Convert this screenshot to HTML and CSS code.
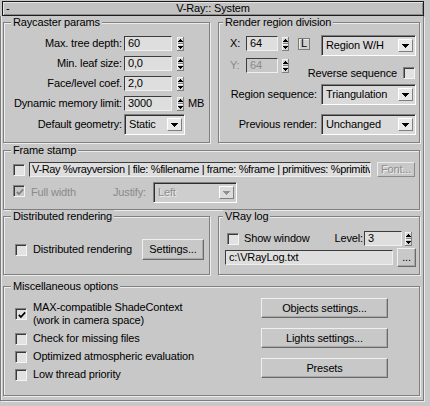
FILE: index.html
```html
<!DOCTYPE html>
<html>
<head>
<meta charset="utf-8">
<link rel="stylesheet" href="styles.css">
</head>
<body>
<div class="titlebar"><span class="minus">-</span><span class="title">V-Ray:: System</span><span></span></div>
<div class="panel">
  <div class="row1">
    <div class="group g-ray">
      <span class="glabel">Raycaster params</span>
      <div class="gbody ray-body">
        <div class="prow"><span class="plabel">Max. tree depth:</span><span class="field w48">60</span><svg class="spin" width="7" height="14" viewBox="0 0 7 14" shape-rendering="crispEdges"><rect width="7" height="14" fill="#d2d2d2"/><rect width="7" height="1" fill="#f2f2f2"/><rect width="1" height="14" fill="#f2f2f2"/><rect y="13" width="7" height="1" fill="#808080"/><rect x="6" width="1" height="14" fill="#808080"/><rect x="1" y="6" width="5" height="1" fill="#808080"/><rect x="1" y="7" width="5" height="1" fill="#f2f2f2"/><path d="M3 2h1v1H3zM2 3h3v1H2zM1 4h5v1H1zM1 9h5v1H1zM2 10h3v1H2zM3 11h1v1H3z" fill="#000"/></svg></div>
        <div class="prow"><span class="plabel">Min. leaf size:</span><span class="field w48">0,0</span><svg class="spin" width="7" height="14" viewBox="0 0 7 14" shape-rendering="crispEdges"><rect width="7" height="14" fill="#d2d2d2"/><rect width="7" height="1" fill="#f2f2f2"/><rect width="1" height="14" fill="#f2f2f2"/><rect y="13" width="7" height="1" fill="#808080"/><rect x="6" width="1" height="14" fill="#808080"/><rect x="1" y="6" width="5" height="1" fill="#808080"/><rect x="1" y="7" width="5" height="1" fill="#f2f2f2"/><path d="M3 2h1v1H3zM2 3h3v1H2zM1 4h5v1H1zM1 9h5v1H1zM2 10h3v1H2zM3 11h1v1H3z" fill="#000"/></svg></div>
        <div class="prow"><span class="plabel">Face/level coef.</span><span class="field w48">2,0</span><svg class="spin" width="7" height="14" viewBox="0 0 7 14" shape-rendering="crispEdges"><rect width="7" height="14" fill="#d2d2d2"/><rect width="7" height="1" fill="#f2f2f2"/><rect width="1" height="14" fill="#f2f2f2"/><rect y="13" width="7" height="1" fill="#808080"/><rect x="6" width="1" height="14" fill="#808080"/><rect x="1" y="6" width="5" height="1" fill="#808080"/><rect x="1" y="7" width="5" height="1" fill="#f2f2f2"/><path d="M3 2h1v1H3zM2 3h3v1H2zM1 4h5v1H1zM1 9h5v1H1zM2 10h3v1H2zM3 11h1v1H3z" fill="#000"/></svg></div>
        <div class="prow"><span class="plabel">Dynamic memory limit:</span><span class="field w48">3000</span><svg class="spin" width="7" height="14" viewBox="0 0 7 14" shape-rendering="crispEdges"><rect width="7" height="14" fill="#d2d2d2"/><rect width="7" height="1" fill="#f2f2f2"/><rect width="1" height="14" fill="#f2f2f2"/><rect y="13" width="7" height="1" fill="#808080"/><rect x="6" width="1" height="14" fill="#808080"/><rect x="1" y="6" width="5" height="1" fill="#808080"/><rect x="1" y="7" width="5" height="1" fill="#f2f2f2"/><path d="M3 2h1v1H3zM2 3h3v1H2zM1 4h5v1H1zM1 9h5v1H1zM2 10h3v1H2zM3 11h1v1H3z" fill="#000"/></svg><span class="mb">MB</span></div>
        <div class="prow prow-combo"><span class="plabel">Default geometry:</span><span class="combo w61">Static<span class="arrow"><svg width="7" height="4" viewBox="0 0 7 4" shape-rendering="crispEdges"><path d="M0 0h7v1H0zM1 1h5v1H1zM2 2h3v1H2zM3 3h1v1H3z" fill="#000"/></svg></span></span></div>
      </div>
    </div>
    <div class="group g-rr">
      <span class="glabel glabel-r">Render region division</span>
      <div class="gbody rr-body">
        <div class="rr-top">
          <div class="rr-left">
            <div class="xrow"><span class="xlabel">X:</span><span class="field w32">64</span><svg class="spin sp4" width="7" height="14" viewBox="0 0 7 14" shape-rendering="crispEdges"><rect width="7" height="14" fill="#d2d2d2"/><rect width="7" height="1" fill="#f2f2f2"/><rect width="1" height="14" fill="#f2f2f2"/><rect y="13" width="7" height="1" fill="#808080"/><rect x="6" width="1" height="14" fill="#808080"/><rect x="1" y="6" width="5" height="1" fill="#808080"/><rect x="1" y="7" width="5" height="1" fill="#f2f2f2"/><path d="M3 2h1v1H3zM2 3h3v1H2zM1 4h5v1H1zM1 9h5v1H1zM2 10h3v1H2zM3 11h1v1H3z" fill="#000"/></svg><span class="lbtn">L</span></div>
            <div class="xrow"><span class="xlabel dis">Y:</span><span class="field w32 field-dis">64</span><svg class="spin sp4" width="7" height="14" viewBox="0 0 7 14" shape-rendering="crispEdges"><rect width="7" height="14" fill="#d2d2d2"/><rect width="7" height="1" fill="#f2f2f2"/><rect width="1" height="14" fill="#f2f2f2"/><rect y="13" width="7" height="1" fill="#808080"/><rect x="6" width="1" height="14" fill="#808080"/><rect x="1" y="6" width="5" height="1" fill="#808080"/><rect x="1" y="7" width="5" height="1" fill="#f2f2f2"/><path d="M3 2h1v1H3zM2 3h3v1H2zM1 4h5v1H1zM1 9h5v1H1zM2 10h3v1H2zM3 11h1v1H3z" fill="#000"/></svg></div>
          </div>
          <div class="rr-right">
            <span class="combo w95">Region W/H<span class="arrow"><svg width="7" height="4" viewBox="0 0 7 4" shape-rendering="crispEdges"><path d="M0 0h7v1H0zM1 1h5v1H1zM2 2h3v1H2zM3 3h1v1H3z" fill="#000"/></svg></span></span>
            <div class="rev"><span>Reverse sequence</span><span class="chk"></span></div>
          </div>
        </div>
        <div class="rr-row rr-seq"><span>Region sequence:</span><span class="combo w95">Triangulation<span class="arrow"><svg width="7" height="4" viewBox="0 0 7 4" shape-rendering="crispEdges"><path d="M0 0h7v1H0zM1 1h5v1H1zM2 2h3v1H2zM3 3h1v1H3z" fill="#000"/></svg></span></span></div>
        <div class="rr-row rr-prev"><span>Previous render:</span><span class="combo w95">Unchanged<span class="arrow"><svg width="7" height="4" viewBox="0 0 7 4" shape-rendering="crispEdges"><path d="M0 0h7v1H0zM1 1h5v1H1zM2 2h3v1H2zM3 3h1v1H3z" fill="#000"/></svg></span></span></div>
      </div>
    </div>
  </div>

  <div class="group g-fs">
    <span class="glabel">Frame stamp</span>
    <div class="gbody fs-body">
      <div class="fs-row1"><span class="chk"></span><span class="field w342 stamp">V-Ray %vrayversion | file: %filename | frame: %frame | primitives: %primitiv</span><span class="btn btn-dis w38">Font...</span></div>
      <div class="fs-row2"><span class="chk chk-dis"><svg width="8" height="8" viewBox="0 0 8 8"><polyline points="0.8,3.8 2.9,6 7.2,1.4" fill="none" stroke="#808080" stroke-width="1.7"/></svg></span><span class="fw dis">Full width</span><span class="dis">Justify:</span><span class="combo combo-dis w84">Left<span class="arrow"><svg width="7" height="4" viewBox="0 0 7 4" shape-rendering="crispEdges"><path d="M0 0h7v1H0zM1 1h5v1H1zM2 2h3v1H2zM3 3h1v1H3z" fill="#909090"/></svg></span></span></div>
    </div>
  </div>

  <div class="row3">
    <div class="group g-dr">
      <span class="glabel">Distributed rendering</span>
      <div class="gbody dr-body">
        <div class="dr-row"><span class="chk"></span><span class="ctext">Distributed rendering</span><span class="btn w62">Settings...</span></div>
      </div>
    </div>
    <div class="group g-vl">
      <span class="glabel glabel-r">VRay log</span>
      <div class="gbody vl-body">
        <div class="vl-row1"><span class="chk"></span><span class="ctext5">Show window</span><span class="lvl">Level:</span><span class="field w38">3</span><svg class="spin sp3" width="7" height="14" viewBox="0 0 7 14" shape-rendering="crispEdges"><rect width="7" height="14" fill="#d2d2d2"/><rect width="7" height="1" fill="#f2f2f2"/><rect width="1" height="14" fill="#f2f2f2"/><rect y="13" width="7" height="1" fill="#808080"/><rect x="6" width="1" height="14" fill="#808080"/><rect x="1" y="6" width="5" height="1" fill="#808080"/><rect x="1" y="7" width="5" height="1" fill="#f2f2f2"/><path d="M3 2h1v1H3zM2 3h3v1H2zM1 4h5v1H1zM1 9h5v1H1zM2 10h3v1H2zM3 11h1v1H3z" fill="#000"/></svg></div>
        <div class="vl-row2"><span class="field w168">c:\VRayLog.txt</span><span class="btn btn-dots">...</span></div>
      </div>
    </div>
  </div>

  <div class="group g-misc">
    <span class="glabel">Miscellaneous options</span>
    <div class="gbody misc-body">
      <div class="misc-left">
        <div class="mrow"><span class="chk"><svg width="8" height="8" viewBox="0 0 8 8"><polyline points="0.8,3.8 2.9,6 7.2,1.4" fill="none" stroke="#000" stroke-width="1.7"/></svg></span><span class="ctext">MAX-compatible ShadeContext<br>(work in camera space)</span></div>
        <div class="mrow"><span class="chk"></span><span class="ctext">Check for missing files</span></div>
        <div class="mrow"><span class="chk"></span><span class="ctext">Optimized atmospheric evaluation</span></div>
        <div class="mrow"><span class="chk"></span><span class="ctext">Low thread priority</span></div>
      </div>
      <div class="misc-right">
        <span class="btn w127">Objects settings...</span>
        <span class="btn w127">Lights settings...</span>
        <span class="btn w127">Presets</span>
      </div>
    </div>
  </div>
</div>
</body>
</html>
```
FILE: styles.css
```css
* { box-sizing: border-box; }
html, body { margin: 0; padding: 0; }
body {
  background: #c8c8c8;
  font-family: "Liberation Sans", Arial, sans-serif;
  font-size: 11px;
  line-height: 13px;
  letter-spacing: -0.15px;
  color: #000;
  width: 430px;
  height: 406px;
  overflow: hidden;
  padding-top: 1px;
}

.titlebar {
  margin-left: 2px;
  width: 422px;
  height: 15px;
  border: 1px solid #1c1c1c;
  background: #c2c2c2;
  box-shadow: inset 1px 1px 0 #e4e4e4, inset -1px -1px 0 #8e8e8e;
  display: grid;
  grid-template-columns: 1fr auto 1fr;
  align-items: center;
}
.minus { padding-left: 3px; }

.panel {
  width: 424px;
  height: 385px;
  border: 1px solid #7c7c7c;
  border-top: 0;
  box-shadow: 1px 1px 0 #ececec, inset 1px 0 0 #ececec;
  padding: 0 3px 4px 2px;
  display: flex;
  flex-direction: column;
}

.group {
  border: 1px solid #808080;
  box-shadow: 1px 1px 0 #ececec, inset 1px 1px 0 #ececec;
  display: flex;
  flex-direction: column;
  flex-shrink: 0;
}
.glabel {
  align-self: flex-start;
  margin: -7px 0 -6px 7px;
  padding: 0 2px;
  height: 13px;
  background: #c8c8c8;
  white-space: nowrap;
}
.glabel-r { margin-left: 4px; }
.gbody { display: flex; flex-direction: column; }

.row1 { display: flex; margin-top: 6px; height: 121px; flex-shrink: 0; }
.g-ray { width: 207px; }
.ray-body { padding-top: 13px; gap: 5px; }
.g-rr { width: 202px; margin-left: 8px; }
.rr-body { padding: 12px 3px 0 0; }

.prow { display: flex; align-items: center; height: 15px; }
.prow-combo { height: 21px; margin-top: -2px; }
.plabel { width: 118px; margin-right: 2px; text-align: right; white-space: nowrap; }

.field {
  height: 15px;
  border: 1px solid;
  border-color: #3c3c3c #f0f0f0 #f0f0f0 #3c3c3c;
  background: #dedede;
  padding-left: 3px;
  white-space: nowrap;
  overflow: hidden;
  flex-shrink: 0;
}
.stamp { letter-spacing: -0.35px; padding-left: 2px; }
.field-dis { background: #c8c8c8; color: #8a8a8a; }
.w32 { width: 32px; }
.w38 { width: 38px; }
.w48 { width: 48px; }
.w168 { width: 168px; }
.w342 { width: 342px; }
.w61 { width: 61px; }
.w62 { width: 62px; }
.w84 { width: 84px; }
.w95 { width: 95px; }
.w127 { width: 127px; }

.spin { display: block; margin-left: 5px; flex-shrink: 0; }
.sp4 { margin-left: 4px; }
.sp3 { margin-left: 3px; }
.mb { margin-left: 4px; }

.combo {
  height: 21px;
  border: 1px solid;
  border-color: #808080 #ffffff #ffffff #808080;
  box-shadow: inset 1px 1px 0 #2e2e2e, inset -1px -1px 0 #dadada;
  background: #dadada;
  display: flex;
  align-items: center;
  padding: 0 2px 0 4px;
  white-space: nowrap;
  flex-shrink: 0;
}
.arrow {
  margin-left: auto;
  width: 15px;
  height: 13px;
  border: 1px solid;
  border-color: #ffffff #808080 #808080 #ffffff;
  background: #e8e8e8;
  display: flex;
  align-items: center;
  justify-content: center;
}
.combo-dis { color: #8e8e8e; text-shadow: 1px 1px 0 #ececec; background: #cecece; box-shadow: inset 1px 1px 0 #2e2e2e, inset -1px -1px 0 #cecece; }
.combo-dis .arrow { background: #dcdcdc; }

.rr-top { display: flex; justify-content: space-between; }
.rr-left { display: flex; flex-direction: column; gap: 7px; padding: 1px 0 0 11px; }
.xrow { display: flex; align-items: center; height: 15px; }
.xlabel { width: 16px; }
.dis { color: #8a8a8a; }
.lbtn {
  margin-left: 9px;
  width: 12px;
  height: 12px;
  border: 1px solid #7a7a7a;
  background: #cdcdcd;
  box-shadow: inset 1px 1px 0 #ececec;
  display: flex;
  align-items: center;
  justify-content: center;
}
.rr-right { width: 95px; flex-shrink: 0; display: flex; flex-direction: column; align-items: flex-end; }
.rev { display: flex; align-items: center; gap: 6px; height: 12px; margin-top: 11px; margin-right: 1px; white-space: nowrap; flex-shrink: 0; }
.rr-row { display: flex; justify-content: flex-end; align-items: center; gap: 4px; white-space: nowrap; }
.rr-seq { margin-top: 5px; }
.rr-prev { margin-top: 9px; }

.chk {
  width: 12px;
  height: 12px;
  border: 1px solid;
  border-color: #808080 #f4f4f4 #f4f4f4 #808080;
  box-shadow: inset 1px 1px 0 #3a3a3a;
  background: #e2e2e2;
  flex-shrink: 0;
  display: flex;
  align-items: center;
  justify-content: center;
  padding: 1px 0 0 1px;
}
.chk svg { display: block; }
.chk-dis { background: #c8c8c8; }

.btn {
  height: 20px;
  border: 1px solid;
  border-color: #f0f0f0 #6a6a6a #6a6a6a #f0f0f0;
  box-shadow: inset -1px -1px 0 #a8a8a8;
  background: #c8c8c8;
  display: flex;
  align-items: center;
  justify-content: center;
  white-space: nowrap;
  flex-shrink: 0;
}
.btn-dis { height: 15px; color: #8e8e8e; text-shadow: 1px 1px 0 #f0f0f0; margin-left: 6px; box-shadow: none; border-color: #ececec #8a8a8a #8a8a8a #ececec; }

.g-fs { height: 60px; margin-top: 7px; }
.fs-body { padding: 11px 0 0 9px; }
.fs-row1 { display: flex; align-items: center; height: 15px; }
.fs-row1 .field { margin-left: 4px; }
.fs-row2 { display: flex; align-items: center; height: 21px; margin-top: 5px; }
.fs-row2 .chk { align-self: flex-start; margin-top: 3px; }
.fw { width: 88px; padding-left: 6px; }
.fs-row2 .combo { margin-left: 7px; }

.row3 { display: flex; margin-top: 6px; height: 59px; flex-shrink: 0; }
.g-dr { width: 207px; }
.dr-body { padding: 22px 5px 0 11px; }
.g-vl { width: 202px; margin-left: 8px; }
.vl-body { padding: 14px 3px 0 6px; }
.dr-row { display: flex; align-items: center; height: 21px; }
.ctext { margin-left: 6px; white-space: nowrap; }
.ctext5 { margin-left: 5px; white-space: nowrap; }
.dr-row .btn { margin-left: auto; height: 21px; }
.vl-row1 { display: flex; align-items: center; height: 15px; padding-left: 2px; padding-right: 4px; }
.lvl { margin-left: auto; margin-right: 1px; }
.vl-row2 { display: flex; align-items: center; height: 19px; margin-top: 2px; }
.btn-dots { margin-left: 4px; width: 19px; height: 19px; }

.g-misc { height: 110px; margin-top: 11px; }
.misc-body { flex-direction: row; }
.misc-left { display: flex; flex-direction: column; gap: 5px; padding: 14px 0 0 11px; }
.mrow { display: flex; align-items: center; }
.misc-right { margin-left: auto; margin-right: 31px; padding-top: 11px; display: flex; flex-direction: column; gap: 10px; }
```
